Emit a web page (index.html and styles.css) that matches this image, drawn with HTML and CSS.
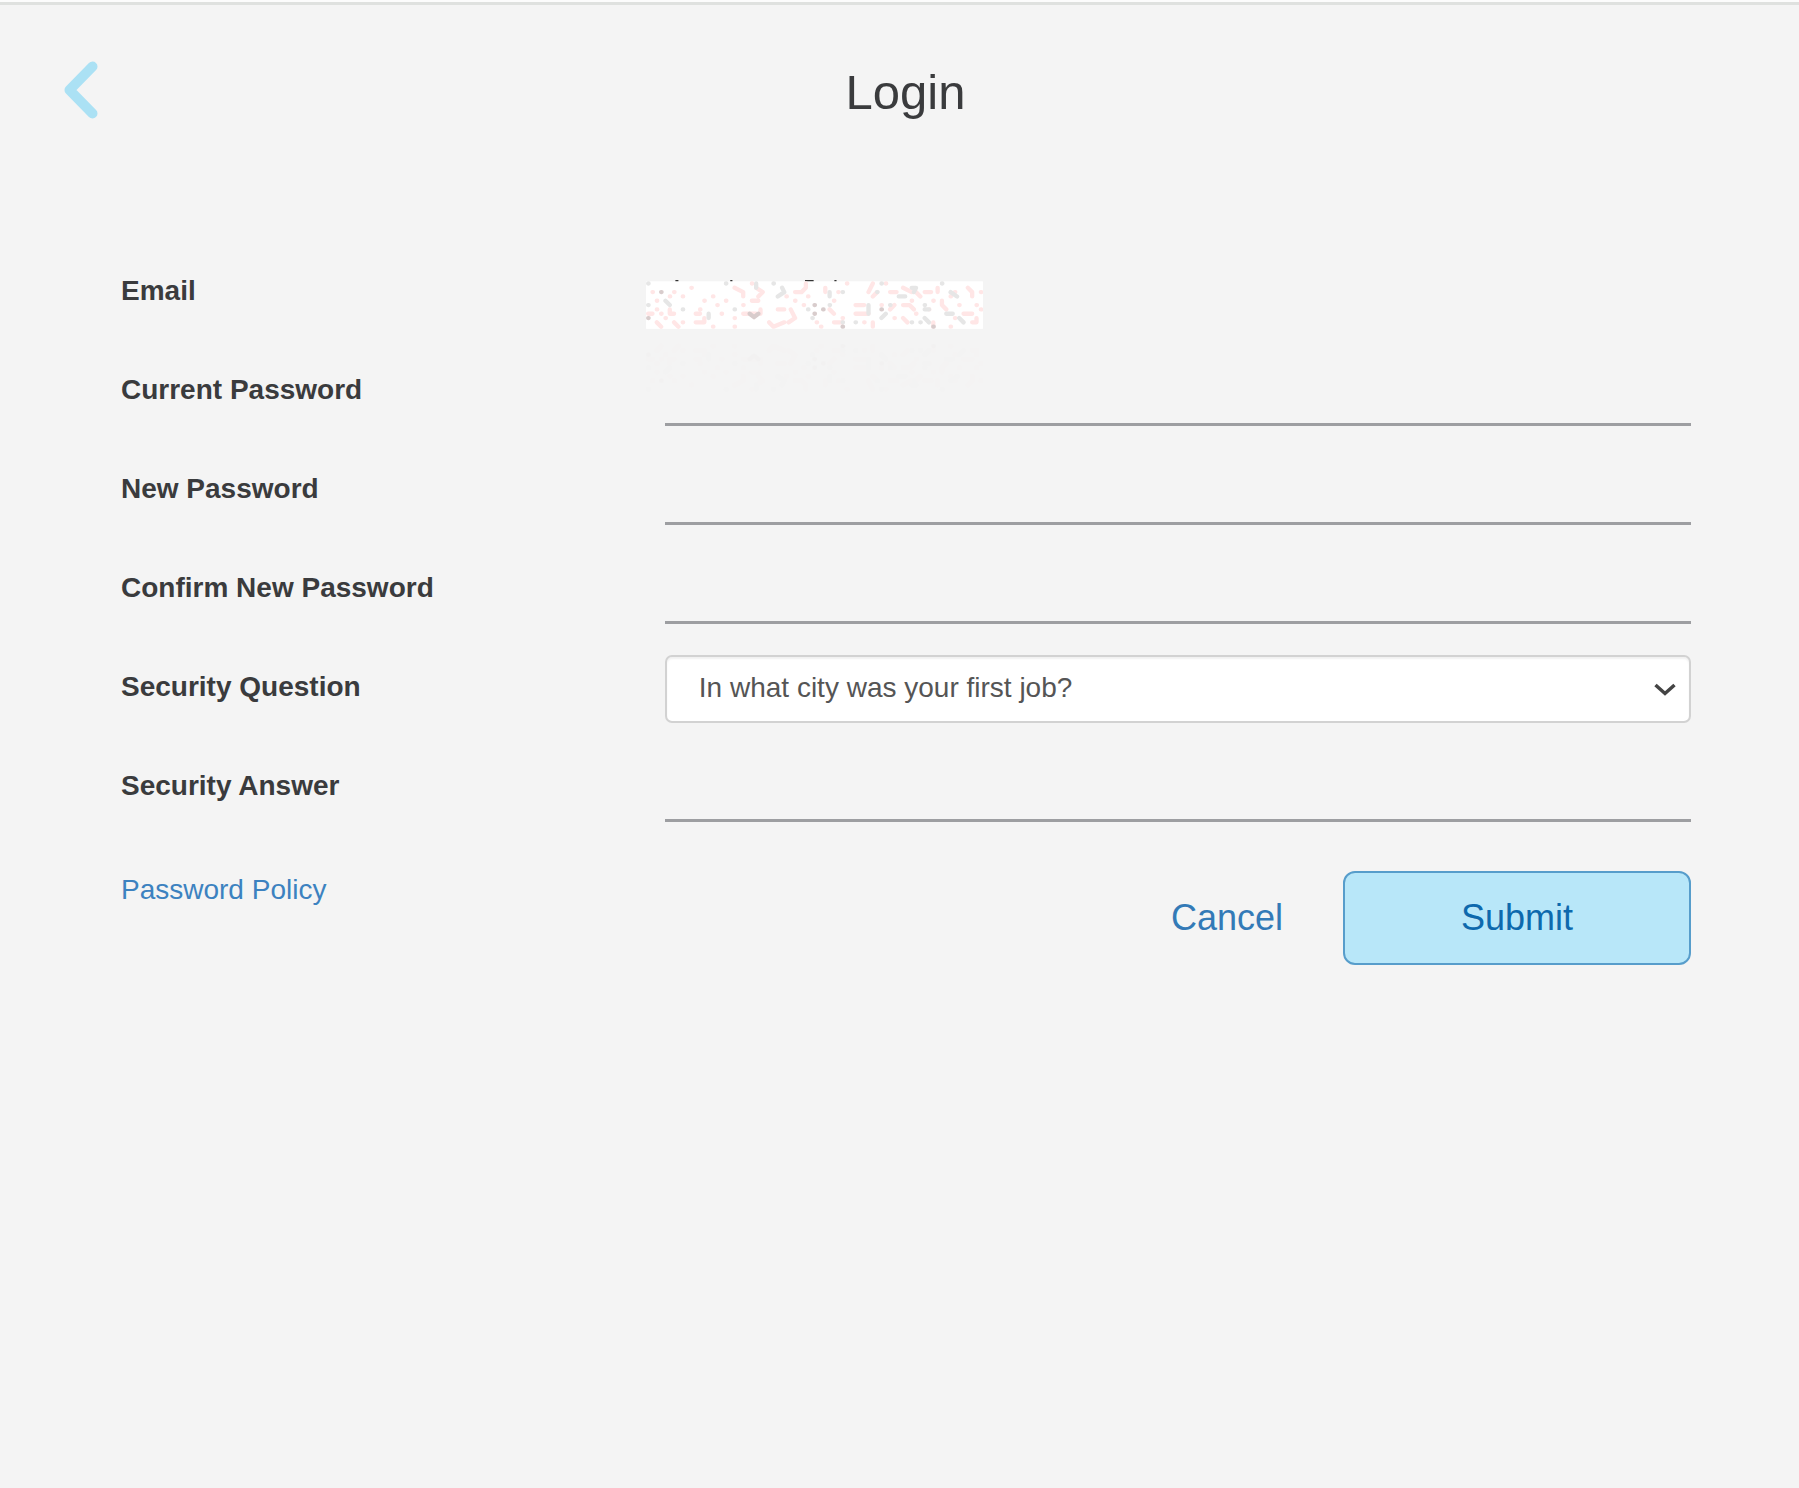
FILE: index.html
```
<!DOCTYPE html>
<html lang="en">

<head>
    <meta charset="utf-8">
    <title>Login</title>
    <link rel="stylesheet" href="styles.css">
</head>

<body>

<header class="header">
    <button class="back" type="button" aria-label="Back">
        <svg viewBox="0 0 34 58" width="34" height="58">
            <path d="M28.500 5.500 L5.500 29 L28.500 52.500"/>
        </svg>
    </button>
    <h1 class="title">Login</h1>
</header>

<form class="login-form">
    <div class="row">
        <span class="label">Email</span>
        <div class="email">
            <!-- masked address -->
            <svg class="mask" viewBox="0 -1 78 27">
                <path class="mask-text" d="M6.800 -.1h.7M19.500 -.1h.5M36.800 -.1h2M43.600 -.1h.5"/>
                <rect width="78" height="11" fill="#fff"/>
                <g id="noise">
                    <path class="pink" d="M1.500 2.500h.1M6.500 2.500h.1M5.500 3.500h.1M2.500 4.500h.1M8.500 3.500h.1M10.500 1.500h.1M2.500 6.500h.1M.5 7.500h1M3.500 7.500h.1M5.500 6.500v1h1M4.500 8.500h.1M2.500 9.500l1 1M6.500 9.500l1 1M8.500 9.500h.1M13.500 4.500h.1M15.500 3.500h.1M12.500 6.500h.1M16.500 5.500h.1M11.500 7.500h1M17.500 7.500h.1M11.500 9.500h2M13.500 8.500v1M15.500 10.500h.1M18.500 4.500h.1M20.500 1.500l2 1v1M24.500 .5h.1M25.500 1.500l1.500 1l-1 1M24.500 4.500h1.500M22.500 5.500h.1M22.500 7.500h3M20.500 8.500h.1M20.500 10.500h.1M26.500 6.500v1M28.500 9.500l1 1l2.500 -1M30.500 6.500h1.500M33.500 6.500l1 2l-1.500 1M32.500 3.500h.1M34.500 2.500h1.500l1 -1v-1M37.500 3.500h.1M34.500 4.500h.1M36.500 5.500h.1M41.500 1.500v1M44.500 2.500h.1M46.500 .5h.1M43.500 4.500h.1M42.500 6.500l1 1M39.500 9.500h.1M40.500 10.500h.1M43.500 9.500h2M45.500 8.500h.1M48.500 5.500h2M48.500 7.500h3M51.500 2.500l1 -2M52.500 3.500l1 -1M55.500 .5h.1M56.500 2.500h1.500M50.500 9.500h.1M52.500 9.500v1M54.500 5.500h.1M57.500 8.500h.1M56.500 6.500l1 -1M59.500 1.500l2 1M62.500 2.500l1 1M59.500 5.500h1.500l1 1M61.500 4.500h.1M59.500 8.500l1 1M62.500 7.500h.1M64.500 2.500h1.500M67.500 1.500v1M66.500 4.500h.1M66.500 9.500v1M65.500 6.500h.1M68.500 4.500v1l1 1M70.500 3.500h.1M72.500 5.500h.1M71.500 2.500h.1M74.500 1.500l1 1v1M77.500 2.500h.1M73.500 7.500h2M76.500 5.500h.1M77.500 6.500h.1M76.500 8.500v1h-1M71.500 8.500h.1M70.500 10.500h.1"/>
                    <path class="gray" d="M.5 .5h.1M.5 5.500h.1M4.500 4.500l1 1M8.500 6.500h.1M14.500 7.500v1M18.500 .5h.1M20.500 6.500h.1M25.500 .5v1M29.500 .5h.1M31.500 1.500l.5 1l-1.500 1M42.500 2.500v1M42.500 5.500h.1M45.500 2.500h.1M37.500 6.500h.1M38.500 8.500h.1M45.500 9.500h.1M48.500 9.500h.1M51.500 5.500v2M53.500 2.500h.1M55.500 7.500l-1 1M54.500 .5h.1M58.500 3.500h1.500M61.500 1.500h1l-.5 1M56.500 5.500h.1M64.500 5.500h.1M65.500 6.500h-1M63.500 9.500h.1M68.500 .5h.1M61.500 9.500h.1M64.500 8.500l1 1M70.500 2.500l1.500 1M72.500 8.500l1 1M69.500 7.500h1.500"/>
                    <path class="dark" d="M3.500 2.500h.1M.5 8.500h.1M24 7.500l1 .8l1 -.8M39 5.500h.1M41 6.500h.1M39 7.500h.1M45.500 10.500h.1M54.500 6.500h.1M66.500 10.500h.1"/>
                </g>
                <!-- faint reflection below -->
                <use href="#noise" transform="translate(0 25.500) scale(1 -1)" opacity=".05"/>
            </svg>
        </div>
    </div>
    <div class="row">
        <label class="label" for="current-password">Current Password</label>
        <input class="field" type="password" id="current-password" name="current-password">
    </div>
    <div class="row">
        <label class="label" for="new-password">New Password</label>
        <input class="field" type="password" id="new-password" name="new-password">
    </div>
    <div class="row">
        <label class="label" for="confirm-password">Confirm New Password</label>
        <input class="field" type="password" id="confirm-password" name="confirm-password">
    </div>
    <div class="row">
        <label class="label" for="question">Security Question</label>
        <div class="select-box">
            <select class="select" id="question" name="question">
                <option>In what city was your first job?</option>
            </select>
            <svg class="arrow" viewBox="0 0 22 14" width="22" height="14">
                <path d="M1.500 2 L11 10.500 L20.500 2"/>
            </svg>
        </div>
    </div>
    <div class="row">
        <label class="label" for="answer">Security Answer</label>
        <input class="field" type="text" id="answer" name="answer">
    </div>

    <div class="footer">
        <a class="policy" href="#">Password Policy</a>
        <div class="actions">
            <button class="cancel" type="button">Cancel</button>
            <button class="submit" type="submit">Submit</button>
        </div>
    </div>
</form>

</body>

</html>
```
FILE: styles.css
```
* {
    box-sizing: border-box;
}

body {
    margin: 0;
    background-color: #f4f4f4;
    border-top: 2px solid #fcfcfc;
    font-family: "Liberation Sans", Arial, sans-serif;
    font-size: 28px;
    color: #3a3b3d;
}

button {
    font-family: inherit;
    cursor: pointer;
}

.header {
    display: grid;
    grid-template-columns: 1fr auto 1fr;
    align-items: center;
    height: 176px;
    padding: 0 52px 4px 64px;
    border-top: 3px solid #dfe1df;
}

.back {
    justify-self: start;
    padding: 0;
    border: none;
    background: none;
    line-height: 0;
}

.back path {
    fill: none;
    stroke: #abe1f4;
    stroke-width: 10;
    stroke-linecap: round;
    stroke-linejoin: round;
}

.title {
    margin: 0;
    padding-top: 4px;
    font-size: 49px;
    font-weight: normal;
}

.login-form {
    padding: 62px 108px 0 121px;
}

.row {
    display: grid;
    grid-template-columns: 53fr 100fr;
    height: 99px;
    padding: 19px 0 12px;
}

.label {
    font-weight: bold;
    line-height: 64px;
}

.field {
    width: 100%;
    padding: 0 32px;
    border: none;
    border-bottom: 3px solid #9d9ea1;
    background: transparent;
    font: inherit;
    color: #555;
    outline: none;
}

.email {
    position: relative;
}

.mask {
    position: absolute;
    top: 18px;
    left: -19px;
    width: 337px;
}

.mask path {
    fill: none;
    stroke-linecap: round;
    stroke-linejoin: round;
}

.mask .mask-text {
    stroke: #333;
    stroke-width: .4;
    stroke-linecap: butt;
}

.pink {
    stroke: #ffe6e6;
}

.gray {
    stroke: #e6e6e6;
}

.dark {
    stroke: #d8cccc;
}

.select-box {
    position: relative;
    display: flex;
}

.select {
    appearance: none;
    width: 100%;
    padding: 0 60px 4px 32px;
    border: 2px solid #d2d2d2;
    border-radius: 7px;
    background: #fff;
    box-shadow: inset 0 2px 2px rgba(0, 0, 0, .06);
    font: inherit;
    color: #555;
}

.arrow {
    position: absolute;
    right: 15px;
    top: 28px;
    pointer-events: none;
}

.arrow path {
    fill: none;
    stroke: #444;
    stroke-width: 3.500;
}

.footer {
    display: flex;
    justify-content: space-between;
    align-items: flex-start;
    padding-top: 37px;
}

.policy {
    line-height: 38px;
    color: #3c82c0;
    text-decoration: none;
}

.actions {
    display: flex;
    gap: 60px;
}

.cancel,
.submit {
    height: 94px;
    padding: 0;
    font-size: 36px;
}

.cancel {
    border: none;
    background: none;
    color: #337ab7;
}

.submit {
    width: 348px;
    border: 2px solid #579dcb;
    border-radius: 12px;
    background: #b8e7f9;
    color: #0d69ad;
}
```
